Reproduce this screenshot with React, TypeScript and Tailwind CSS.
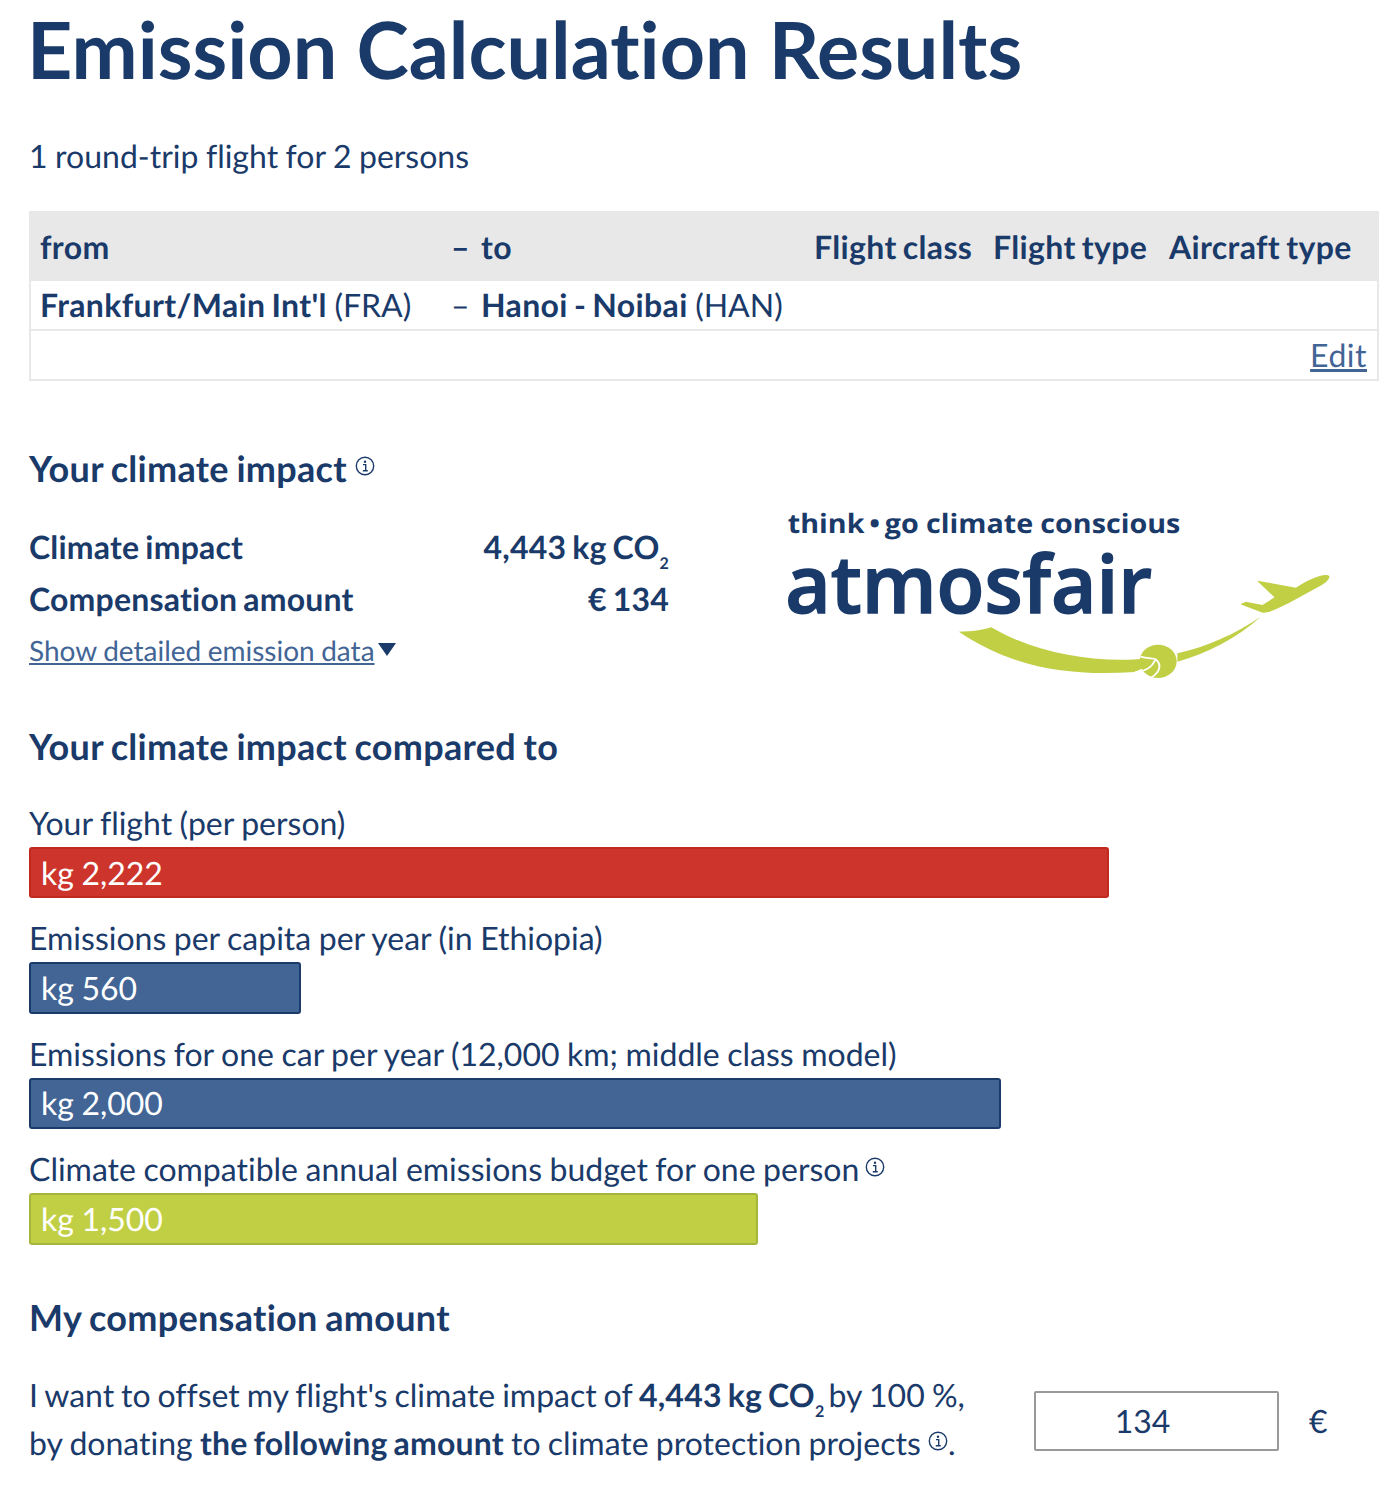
import React from 'react';

const InfoIcon = ({ className = '' }: { className?: string }) => (
  <svg viewBox="0 0 20 20" className={`inline-block w-[20px] h-[20px] ${className}`} fill="none">
    <circle cx="10" cy="10" r="8.7" stroke="#1a3a6a" strokeWidth="1.4" />
    <circle cx="10" cy="5.8" r="1.2" fill="#1a3a6a" />
    <path d="M8 8.6h2.7v6M7.8 14.7h5" stroke="#1a3a6a" strokeWidth="1.4" />
  </svg>
);

const Logo = () => (
  <svg viewBox="0 0 1566 540" className="w-[580px] h-[200px] shrink-0">
    <text
      x="48"
      y="116"
      textLength="1060"
      lengthAdjust="spacingAndGlyphs"
      fontFamily="'Open Sans', sans-serif"
      fontWeight="700"
      fontSize="72"
      fill="#1a3a6a"
    >
      think{'\u2009'}•{'\u2009'}go climate conscious
    </text>
    <text
      x="41"
      y="331"
      textLength="991"
      lengthAdjust="spacingAndGlyphs"
      fontFamily="'Open Sans', sans-serif"
      fontWeight="600"
      fontSize="216"
      fill="#1a3a6a"
      stroke="#1a3a6a"
      strokeWidth="4"
    >
      atmosfair
    </text>
    <g transform="scale(1 0.9)">
      <path
        d="M510 425C545 425 575 420 597 412C720 490 870 522 1035 505C1020 525 1005 538 985 546C800 560 650 530 510 425Z"
        fill="#c1cf45"
      />
      <circle cx="1048" cy="514" r="50" fill="#c1cf45" />
      <path d="M1000 500C1020 505 1035 505 1040 507C1062 525 1050 555 1020 566" stroke="#fff" strokeWidth="5" fill="none" />
      <path d="M985 547C1010 545 1030 535 1040 510" stroke="#fff" strokeWidth="5" fill="none" />
      <path d="M1100 490C1180 470 1260 430 1325 380C1260 445 1180 490 1100 515Z" fill="#c1cf45" />
      <path
        d="M1510 258C1500 250 1470 258 1420 293L1315 272L1362 322L1330 345L1285 335L1270 343L1330 368C1355 368 1375 352 1400 340L1490 285C1505 275 1512 265 1510 258Z"
        fill="#c1cf45"
      />
    </g>
  </svg>
);

const bars = [
  { label: 'Your flight (per person)', value: 'kg 2,222', w: 'w-[1080px]', color: 'bg-[#cd352c] border-[#c1281f]' },
  { label: 'Emissions per capita per year (in Ethiopia)', value: 'kg 560', w: 'w-[272px]', color: 'bg-[#426595] border-[#1a3a6a]' },
  { label: 'Emissions for one car per year (12,000 km; middle class model)', value: 'kg 2,000', w: 'w-[972px]', color: 'bg-[#426595] border-[#1a3a6a]' },
  { label: 'Climate compatible annual emissions budget for one person', value: 'kg 1,500', w: 'w-[729px]', color: 'bg-[#c1cf45] border-[#a6b53d]', info: true },
];

const heading = "h-[48px] text-[36px] font-bold tracking-[0.3px] [word-spacing:-1.5px] whitespace-nowrap";
const strong = "font-bold tracking-[0.2px] [word-spacing:-2px]";
const strongWide = "font-bold tracking-[0.35px] [word-spacing:-2px]";

const App = () => {
  return (
    <div className="w-[1400px] h-[1502px] bg-white text-[#1a3a6a] text-[32px] leading-[48px] font-['Lato',sans-serif] [font-variant-ligatures:none] [text-rendering:geometricPrecision] [word-spacing:-0.7px] pl-[29px] overflow-hidden">
      <h1 className="text-[79px] leading-[98px] font-bold -ml-[2px] [word-spacing:0px]">Emission Calculation Results</h1>

      <p className="mt-[34px] h-[48px]">1 round-trip flight for 2 persons</p>

      {/* Flight table */}
      <div className="mt-[31px] w-[1350px] border-2 border-t-0 border-[#e8e8e8]">
        <div className={`grid grid-cols-[411px_30px_333px_179px_176px_1fr] items-center h-[70px] bg-[#e8e8e8] -mx-[2px] pl-[11px] pt-[2px] ${strongWide}`}>
          <span>from</span>
          <span>–</span>
          <span>to</span>
          <span className="whitespace-nowrap">Flight class</span>
          <span className="whitespace-nowrap">Flight type</span>
          <span className="whitespace-nowrap">Aircraft type</span>
        </div>
        <div className="grid grid-cols-[411px_30px_1fr] items-center h-[50px] pl-[9px] border-b-2 border-[#e8e8e8]">
          <span><b className={strongWide}>Frankfurt/Main Int'l</b> (FRA)</span>
          <span>–</span>
          <span><b className={strongWide}>Hanoi - Noibai</b> (HAN)</span>
        </div>
        <div className="flex justify-end items-center h-[48px] pr-[10px]">
          <a className="underline text-[#426595] tracking-[0.5px]">Edit</a>
        </div>
      </div>

      {/* Climate impact */}
      <h2 className={`mt-[63px] ${heading}`}>
        Your climate impact <InfoIcon className="align-[6px]" />
      </h2>

      <div className="flex">
        <div className="w-[640px] pt-[29px]">
          <div className={`flex justify-between h-[52px] items-center ${strong}`}>
            <span>Climate impact</span>
            <span>4,443 kg CO<sub className="text-[16px] -bottom-[10px]">2</sub></span>
          </div>
          <div className={`flex justify-between h-[52px] items-center ${strong}`}>
            <span>Compensation amount</span>
            <span>€ 134</span>
          </div>
          <div className="flex items-center h-[52px] text-[28px] -mt-[1px]">
            <a className="underline text-[#426595]">Show detailed emission data</a>
            <span className="w-0 h-0 border-x-[9px] border-x-transparent border-t-[13px] border-t-[#1a3a6a] ml-[3px] -mt-[2px]" />
          </div>
        </div>
        <div className="ml-[101px] -mt-[2px]">
          <Logo />
        </div>
      </div>

      <h2 className={`mt-[32px] ${heading}`}>Your climate impact compared to</h2>

      {/* Comparison bars */}
      <div className="mt-[29px] flex flex-col gap-[16px]">
        {bars.map((bar) => (
          <div key={bar.label}>
            <div className="h-[48px] flex items-center gap-[6px]">
              {bar.label}
              {bar.info && <InfoIcon className="-mt-[4px]" />}
            </div>
            <div className={`h-[51.4px] rounded-[3px] border-2 ${bar.w} ${bar.color} flex items-center px-[10px] text-white`}>
              {bar.value}
            </div>
          </div>
        ))}
      </div>

      <h2 className={`mt-[48px] ${heading}`}>My compensation amount</h2>

      <div className="mt-[30px] flex items-center">
        <p className="w-[1005px] whitespace-nowrap [word-spacing:-1px]">
          <span className="[word-spacing:-1.3px]">I want to offset my flight's climate impact of </span>
          <b className={`${strong} mr-[-3px]`}>4,443 kg CO<sub className="text-[16px] -bottom-[10px]">2</sub></b> by 100 %,
          <br />
          by donating <b className={strong}>the following amount</b> to climate protection projects <InfoIcon className="align-[4px]" />.
        </p>
        <div className="mt-[4px] w-[245px] h-[60px] border-2 border-[#999] rounded-[2px] flex items-center justify-center pr-[28px]">134</div>
        <span className="ml-[30px] mt-[4px]">€</span>
      </div>
    </div>
  );
};

export default App;
